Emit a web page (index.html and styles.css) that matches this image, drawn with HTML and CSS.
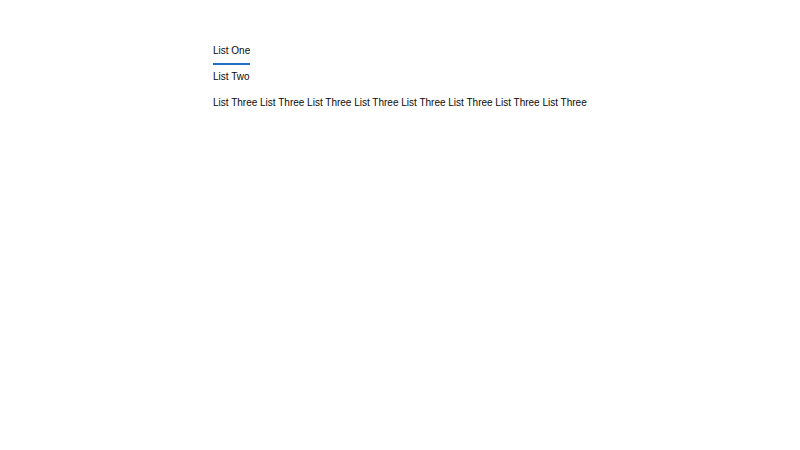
FILE: index.html
```html
<!DOCTYPE html>
<html>
<head>
<meta charset="utf-8">
<link rel="stylesheet" href="styles.css">
</head>
<body>
<ul class="lists">
  <li class="item active">List One</li>
  <li class="item">List Two</li>
  <li class="item">List Three List Three List Three List Three List Three List Three List Three List Three</li>
</ul>
</body>
</html>
```
FILE: styles.css
```css
html, body {
  margin: 0;
  padding: 0;
  background: #ffffff;
}
body {
  font-family: "Liberation Sans", Arial, sans-serif;
  font-size: 10px;
  color: #0a0a0a;
}
.lists {
  list-style: none;
  margin: 0;
  padding: 37px 0 0 213px;
  display: flex;
  flex-direction: column;
  align-items: flex-start;
}
.item {
  line-height: 12px;
  padding: 8px 0 6px;
}
.item.active {
  border-bottom: 2px solid #1f6fc5;
  margin-bottom: -2px;
}
```
